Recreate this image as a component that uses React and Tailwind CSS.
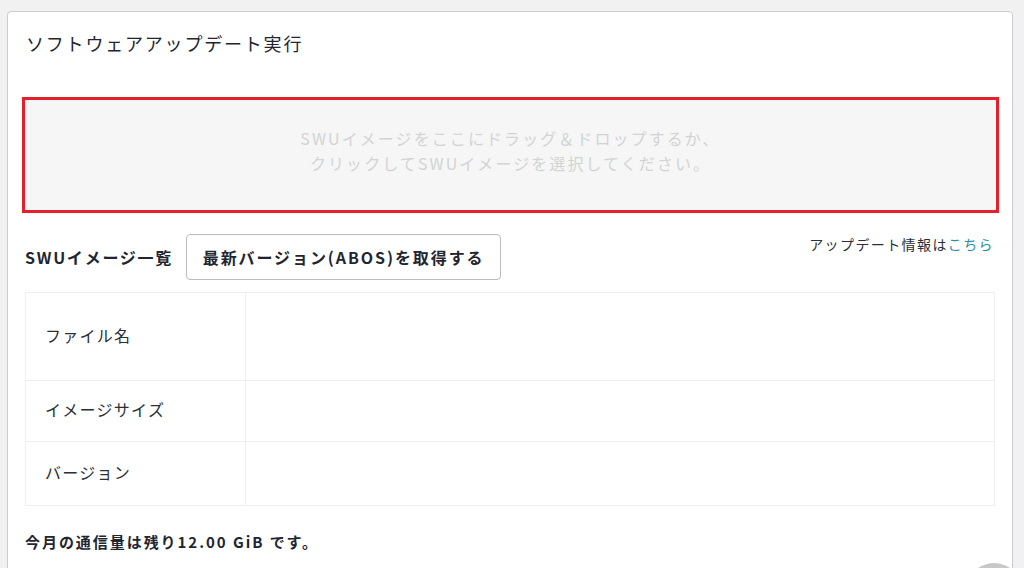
import React from 'react';

const rows = [
  { label: 'ファイル名', h: 'h-[87px]' },
  { label: 'イメージサイズ', h: 'h-[61px]' },
  { label: 'バージョン', h: 'h-[64px]' },
];

export default function App() {
  return (
    <div
      className="relative h-[568px] w-[1024px] overflow-hidden bg-[#f1f1f1] pl-[7px] pt-[11px] text-[#222831]"
      style={{ fontFamily: '"Noto Sans CJK JP", "Noto Sans", sans-serif' }}
    >
      <div className="h-[600px] w-[1006px] rounded-[4px] border border-[#c9ccd1] bg-white px-[14px]">
        {/* Title */}
        <h1 className="pt-[18px] pl-[4px] text-[18px] leading-[26px] font-normal tracking-[0.1em] text-[#1e2630]">
          ソフトウェアアップデート実行
        </h1>

        {/* Drop zone */}
        <div className="mt-[41px] flex h-[116px] w-[977px] flex-col items-center justify-center border-[3px] border-[#e3202b] bg-[#f5f6f5] pb-[8px] text-[16px] leading-[25px] tracking-[0.13em] text-[#d2d4d4]">
          <p>SWUイメージをここにドラッグ＆ドロップするか、</p>
          <p>クリックしてSWUイメージを選択してください。</p>
        </div>

        {/* List header */}
        <div className="mt-[21px] flex items-start justify-between pl-[3px] pr-[4px]">
          <div className="flex items-center gap-[13px]">
            <span className="text-[16px] font-bold tracking-[0.11em] text-[#1e2630]">SWUイメージ一覧</span>
            <button className="h-[46px] w-[315px] rounded-[4px] border border-[#b9bdc2] bg-white text-[16px] font-bold tracking-[0.12em] text-[#1e2630]">
              最新バージョン(ABOS)を取得する
            </button>
          </div>
          <span className="pt-[0px] text-[14px] tracking-[0.1em] text-[#2a2f36]">
            アップデート情報は<span className="text-[#2b8fa6]">こちら</span>
          </span>
        </div>

        {/* Table */}
        <div className="ml-[3px] mt-[12px] w-[970px] border border-[#efefef]">
          {rows.map((r, i) => (
            <div key={r.label} className={`flex ${r.h} ${i > 0 ? 'border-t border-[#efefef]' : ''}`}>
              <div className="flex w-[220px] items-center border-r border-[#efefef] pl-[19px] pb-[4px] text-[16px] tracking-[0.08em] text-[#2a2f36]">
                {r.label}
              </div>
              <div className="flex-1" />
            </div>
          ))}
        </div>

        <p className="mt-[25px] pl-[3px] text-[15px] font-bold tracking-[0.13em] text-[#1e2630]">
          今月の通信量は残り12.00 GiB です。
        </p>
      </div>

      {/* scroll-to-top button peeking in */}
      <div className="absolute left-[966px] top-[563px] h-[56px] w-[56px] rounded-full bg-[#c8c8c8]" />
    </div>
  );
}
